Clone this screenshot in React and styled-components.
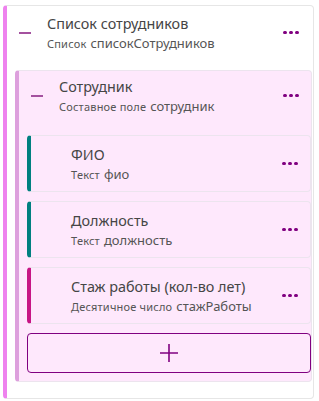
import styled, { createGlobalStyle } from 'styled-components';

const GlobalStyle = createGlobalStyle`
    body {
        margin: 0;
        background: #ffffff;
        font-family: "Noto Sans", "Open Sans", sans-serif;
        color: #444444;
    }
`;

const Page = styled.div`
    padding: 5px 5px 3px 3px;
`;

const Card = styled.div`
    background: ${(p) => p.$bg || '#ffffff'};
    border: 1px solid ${(p) => p.$borderColor || '#e6e6e6'};
    border-left: 4px solid ${(p) => p.$accent};
    border-radius: 4px;
    padding: ${(p) => p.$pad || '0'};
    display: flex;
    flex-direction: column;
`;

const Header = styled.div`
    display: flex;
    align-items: center;
    padding: ${(p) => p.$pad || '8px 0'};
    padding-left: ${(p) => p.$left || '12px'};
    padding-right: ${(p) => p.$right || '12px'};
`;

const Toggle = styled.div`
    width: 12px;
    height: 2px;
    background: ${(p) => (p.$hidden ? 'transparent' : '#a4519f')};
    flex-shrink: 0;
    margin-right: 16px;
`;

const Texts = styled.div`
    flex: 1;
    display: flex;
    flex-direction: column;
    min-width: 0;
`;

const Title = styled.div`
    font-size: 14.4px;
    line-height: 21px;
    height: 21px;
    color: #454545;
`;

const Sub = styled.div`
    display: flex;
    align-items: baseline;
    gap: 4px;
    height: 18px;
    line-height: 18px;
    color: #555555;
`;

const Kind = styled.span`
    font-size: 11px;
    letter-spacing: 0.2px;
`;

const Name = styled.span`
    font-size: 13px;
`;

const Dots = styled.div`
    display: flex;
    gap: 2.5px;
    padding: 4px 1px;
    cursor: pointer;
    span {
        width: 3.6px;
        height: 3.6px;
        border-radius: 50%;
        background: #800080;
    }
`;

const Children = styled.div`
    display: flex;
    flex-direction: column;
    gap: 9px;
`;

const AddButton = styled.button`
    height: 40px;
    border: 1px solid #800080;
    border-radius: 4px;
    background: transparent;
    display: flex;
    align-items: center;
    justify-content: center;
    cursor: pointer;
    padding: 0;
`;

const Row = ({ title, kind, name, open, left, pad, right }) => (
    <Header $left={left} $pad={pad} $right={right}>
        <Toggle $hidden={!open} />
        <Texts>
            <Title>{title}</Title>
            <Sub>
                <Kind>{kind}</Kind>
                <Name>{name}</Name>
            </Sub>
        </Texts>
        <Dots>
            <span />
            <span />
            <span />
        </Dots>
    </Header>
);

const fields = [
    { title: 'ФИО', kind: 'Текст', name: 'фио', accent: '#008080' },
    { title: 'Должность', kind: 'Текст', name: 'должность', accent: '#008080' },
    { title: 'Стаж работы (кол-во лет)', kind: 'Десятичное число', name: 'стажРаботы', accent: '#c71585' },
];

const App = () => (
    <Page>
        <GlobalStyle />
        <Card $accent="#ee82ee" $pad="0 1px 16px 8px">
            <Row
                open
                title="Список сотрудников"
                kind="Список"
                name="списокСотрудников"
                pad="7px 0 18px"
                left="4px"
                right="12px"
            />
            <Card $accent="#dda0dd" $bg="#fee8fc" $borderColor="#ece4ee" $pad="0 0 8px 8px">
                <Row
                    open
                    title="Сотрудник"
                    kind="Составное поле"
                    name="сотрудник"
                    pad="5px 0 20px"
                    left="4px"
                    right="11px"
                />
                <Children>
                    {fields.map((f) => (
                        <Card key={f.name} $accent={f.accent} $bg="#fee8fc" $borderColor="#ece4ee">
                            <Row title={f.title} kind={f.kind} name={f.name} left="12px" right="11px" />
                        </Card>
                    ))}
                    <AddButton>
                        <svg width="20" height="20" viewBox="0 0 20 20">
                            <path d="M10 1v18M1 10h18" stroke="#800080" strokeWidth="1.6" fill="none" />
                        </svg>
                    </AddButton>
                </Children>
            </Card>
        </Card>
    </Page>
);

export default App;
